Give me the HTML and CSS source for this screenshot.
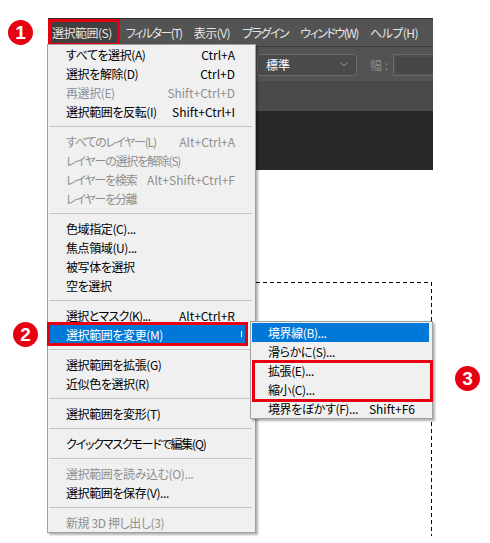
FILE: index.html
```html
<!DOCTYPE html>
<html lang="ja">
<head>
    <meta charset="UTF-8">
    <meta name="viewport" content="width=device-width, initial-scale=1.0">
    <title>選択範囲メニュー</title>
    <link rel="stylesheet" href="styles.css">
</head>
<body>
    <div class="screen">
        <span class="badge b1">1</span>

        <div class="app">
            <div class="menubar">
                <span class="mb-item active">選択範囲(S)</span>
                <span class="mb-item kana">フィルター(T)</span>
                <span class="mb-item">表示(V)</span>
                <span class="mb-item kana">プラグイン</span>
                <span class="mb-item kana">ウィンドウ(W)</span>
                <span class="mb-item">ヘルプ(H)</span>
            </div>
            <div class="options">
                <div class="select">
                    <span>標準</span>
                    <svg class="chevron" width="8" height="5" viewBox="0 0 8 5"><polyline points="0.5,0.5 4,4 7.5,0.5" fill="none" stroke="#9a9a9a" stroke-width="1"/></svg>
                </div>
                <span class="label">幅 :</span>
                <div class="field"></div>
            </div>
            <div class="tabs"></div>
            <div class="workspace"></div>
        </div>

        <div class="marquee"></div>

        <!-- 選択範囲 dropdown -->
        <div class="menu">
            <div class="item"><span>すべてを選択(A)</span><span class="key">Ctrl+A</span></div>
            <div class="item"><span>選択を解除(D)</span><span class="key">Ctrl+D</span></div>
            <div class="item off"><span>再選択(E)</span><span class="key">Shift+Ctrl+D</span></div>
            <div class="item"><span>選択範囲を反転(I)</span><span class="key">Shift+Ctrl+I</span></div>
            <div class="sep"></div>
            <div class="item off tight"><span>すべてのレイヤー(L)</span><span class="key">Alt+Ctrl+A</span></div>
            <div class="item off tight"><span>レイヤーの選択を解除(S)</span></div>
            <div class="item off tight"><span>レイヤーを検索</span><span class="key">Alt+Shift+Ctrl+F</span></div>
            <div class="item off tight"><span>レイヤーを分離</span></div>
            <div class="sep"></div>
            <div class="item"><span>色域指定(C)...</span></div>
            <div class="item"><span>焦点領域(U)...</span></div>
            <div class="item"><span>被写体を選択</span></div>
            <div class="item"><span>空を選択</span></div>
            <div class="sep"></div>
            <div class="item semi"><span>選択とマスク(K)...</span><span class="key">Alt+Ctrl+R</span></div>
            <div class="item hover">
                <span>選択範囲を変更(M)</span>
                <span class="arrow"></span>
                <span class="mark mark-2"></span>
            </div>
            <div class="sep"></div>
            <div class="item"><span>選択範囲を拡張(G)</span></div>
            <div class="item"><span>近似色を選択(R)</span></div>
            <div class="sep"></div>
            <div class="item"><span>選択範囲を変形(T)</span></div>
            <div class="sep"></div>
            <div class="item tight"><span>クイックマスクモードで編集(Q)</span></div>
            <div class="sep"></div>
            <div class="item off"><span>選択範囲を読み込む(O)...</span></div>
            <div class="item"><span>選択範囲を保存(V)...</span></div>
            <div class="sep"></div>
            <div class="item off"><span>新規 3D 押し出し(3)</span></div>
        </div>

        <!-- 選択範囲を変更 submenu -->
        <div class="menu submenu">
            <div class="item hover"><span>境界線(B)...</span></div>
            <div class="item"><span>滑らかに(S)...</span></div>
            <div class="item"><span>拡張(E)...</span></div>
            <div class="item"><span>縮小(C)...</span></div>
            <div class="item"><span>境界をぼかす(F)...</span><span class="key">Shift+F6</span></div>
            <span class="mark mark-3"></span>
        </div>

        <span class="badge b2">2</span>
        <span class="badge b3">3</span>
    </div>
</body>
</html>
```

FILE: styles.css
```css
:root {
    --mark-red: #e60012;
    --menu-bg: #f0f0f0;
    --menu-border: #a0a0a0;
    --hover-blue: #0078d7;
    --ps-bar: #535353;
}

body {
    margin: 0;
    background-color: #ffffff;
    font-family: "Noto Sans CJK JP", sans-serif;
    font-feature-settings: "palt";
    overflow: hidden;
}

.screen {
    position: relative;
    width: 490px;
    height: 543px;
    padding: 18px 0 0 48px;
    box-sizing: border-box;
}

/* Photoshop window */
.app {
    width: 385px;
    overflow: hidden;
}

.menubar {
    display: flex;
    height: 27px;
    border-top: 1px solid #2f2f2f;
    border-bottom: 1px solid #3b3b3b;
    background-color: var(--ps-bar);
}

.mb-item {
    padding: 0 6px;
    line-height: 27px;
    font-size: 12px;
    letter-spacing: -0.5px;
    color: #e6e6e6;
    white-space: nowrap;
}

.mb-item.kana {
    letter-spacing: -1.5px;
}

.mb-item.active {
    padding-left: 4px;
    padding-right: 8px;
    background-color: #404040;
    box-shadow: inset 0 0 0 3px var(--mark-red);
}

.options {
    display: flex;
    align-items: center;
    height: 35px;
    padding-left: 209px;
    border-bottom: 1px solid #404040;
    background-color: var(--ps-bar);
}

.select {
    display: flex;
    align-items: center;
    justify-content: space-between;
    flex: none;
    width: 100px;
    height: 22px;
    padding: 0 8px;
    box-sizing: border-box;
    border: 1px solid #6a6a6a;
    border-radius: 3px;
    background-color: #4a4a4a;
    font-size: 12px;
    color: #ffffff;
}

.label {
    margin-left: 13px;
    font-size: 12px;
    color: #8a8a8a;
    white-space: nowrap;
}

.field {
    flex: none;
    width: 60px;
    height: 22px;
    margin-left: 5px;
    box-sizing: border-box;
    border: 1px solid #6a6a6a;
    background-color: #464646;
    box-shadow: inset 0 0 0 2px #4e4e4e;
}

.tabs {
    height: 28px;
    background-color: #4a4a4a;
}

.workspace {
    height: 59px;
    background-color: #282828;
}

/* selection marquee on the canvas */
.marquee {
    position: absolute;
    left: 200px;
    top: 282px;
    width: 232px;
    height: 254px;
    background-image:
        repeating-linear-gradient(to right, #000 0 4px, transparent 4px 7px),
        repeating-linear-gradient(to bottom, #000 0 4px, transparent 4px 7px);
    background-size: 100% 1px, 1px 100%;
    background-position: left top, right top;
    background-repeat: no-repeat;
}

/* menus */
.menu {
    position: absolute;
    left: 47px;
    top: 44px;
    width: 207px;
    border: 1px solid var(--menu-border);
    background-color: var(--menu-bg);
    box-shadow: 2px 2px 2px rgb(0 0 0 / 0.3);
}

.item {
    position: relative;
    display: flex;
    align-items: center;
    justify-content: space-between;
    height: 19px;
    padding: 0 20px 0 18px;
    font-size: 12px;
    letter-spacing: -0.4px;
    color: #000000;
    white-space: nowrap;
}

.item.semi {
    letter-spacing: -0.7px;
}

.item.tight {
    letter-spacing: -1.2px;
}

.item .key {
    letter-spacing: 0;
}

.item.off {
    color: #8f8f8f;
}

.item.hover {
    margin-right: 9px;
    padding-right: 11px;
    background-color: var(--hover-blue);
    color: #ffffff;
}

.arrow {
    position: absolute;
    right: 4px;
    top: 6px;
    width: 1px;
    height: 6px;
    background-color: #ffffff;
}

.sep {
    position: relative;
    height: 11px;
}

.sep::before {
    content: "";
    position: absolute;
    left: 1px;
    right: 3px;
    top: 5px;
    height: 1px;
    background-color: #c4c4c4;
}

.submenu {
    left: 250px;
    top: 321px;
    width: 181px;
    padding-top: 1px;
}

.submenu .item {
    padding: 0 17px;
}

.submenu .item.hover {
    margin: 0 3px 0 1px;
    padding-left: 16px;
}

/* red annotations */
.mark {
    position: absolute;
    box-sizing: border-box;
    border: 3px solid var(--mark-red);
}

.mark-2 {
    left: -1px;
    top: -3px;
    width: 201px;
    height: 24px;
}

.mark-3 {
    left: 1px;
    top: 38px;
    width: 181px;
    height: 42px;
}

.badge {
    position: absolute;
    width: 25px;
    height: 25px;
    border-radius: 50%;
    background-color: var(--mark-red);
    color: #ffffff;
    font: bold 19px/25px "Liberation Sans", sans-serif;
    text-align: center;
}

.b1 {
    left: 8px;
    top: 20px;
}

.b2 {
    left: 13px;
    top: 322px;
}

.b3 {
    left: 455px;
    top: 366px;
}
```
